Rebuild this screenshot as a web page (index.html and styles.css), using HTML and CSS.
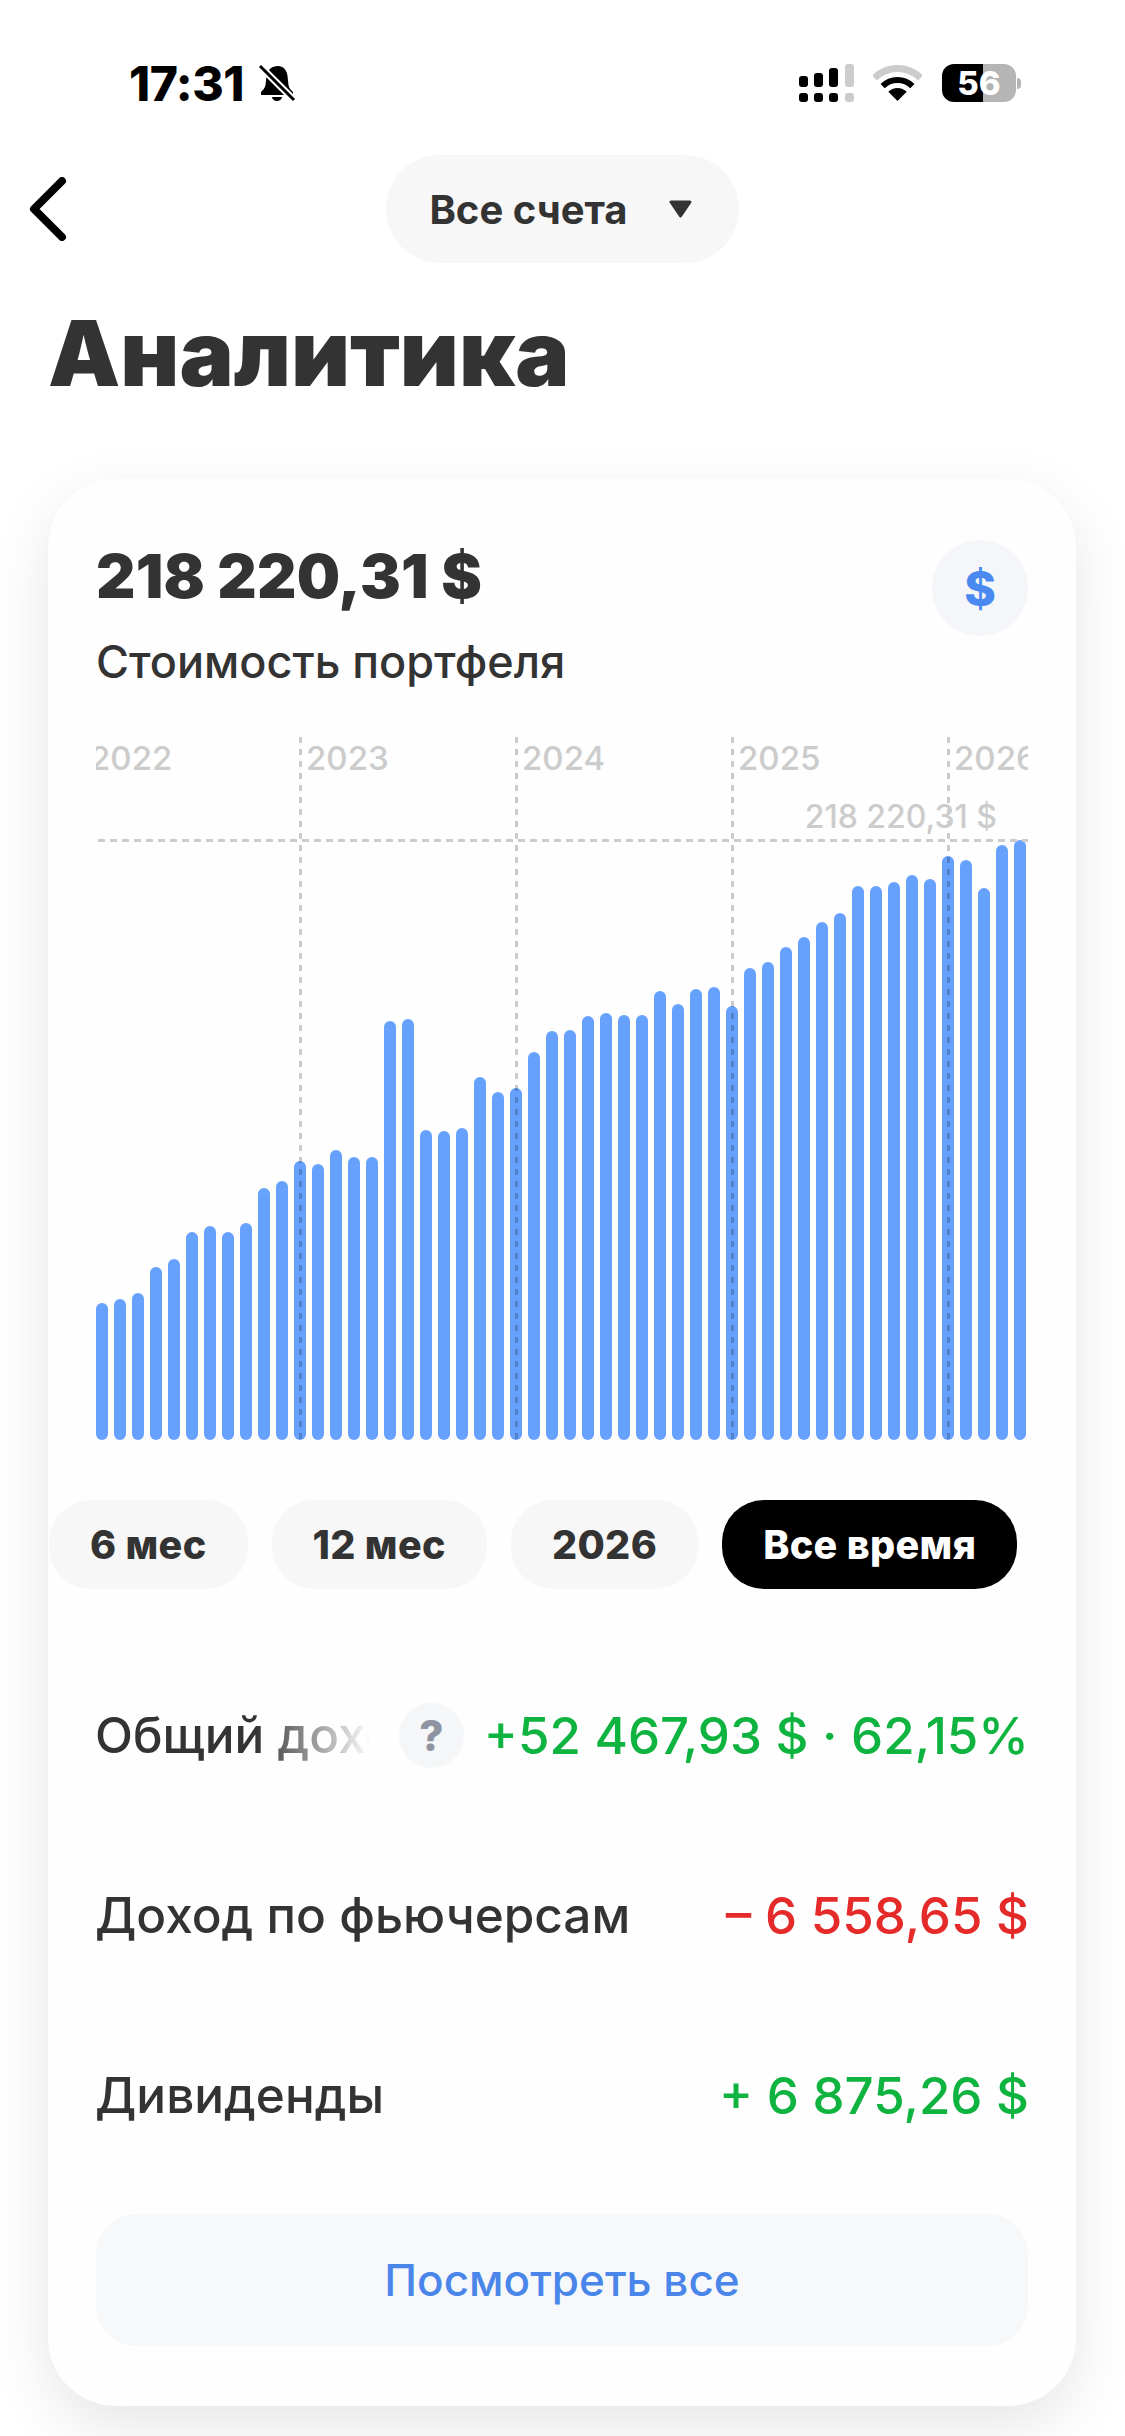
FILE: index.html
```html
<!DOCTYPE html>
<html lang="ru">
<head>
    <meta charset="UTF-8">
    <meta name="viewport" content="width=device-width, initial-scale=1.0">
    <title>Аналитика</title>
    <link rel="stylesheet" href="styles.css">
</head>
<body>
    <div class="status-bar">
        <div class="status-left">
            <span class="status-time">17:31</span>
            <svg class="bell" width="38" height="38" viewBox="0 0 38 38">
                <path d="M20 2c5 0 9 4 9.500 10l1 9c.3 3 2.500 5 4.500 7v3H3v-3c2-2 4-4 4.500-7l1-9C9 6 14 2 20 2z" fill="#000"/>
                <path d="M14 33h10a5 4 0 0 1-10 0z" fill="#000"/>
                <path d="M2 2l34 34" stroke="#fff" stroke-width="7"/>
                <path d="M2 2l34 34" stroke="#000" stroke-width="3"/>
            </svg>
        </div>
        <div class="status-right">
            <svg class="signal" width="55" height="38" viewBox="0 0 55 38">
                <rect x="0" y="12" width="9" height="11" rx="3"/>
                <rect x="15" y="9" width="9" height="14" rx="3"/>
                <rect x="30" y="4" width="9" height="19" rx="3"/>
                <rect class="off" x="46" y="0" width="9" height="23" rx="3"/>
                <rect x="0" y="29" width="9" height="9" rx="3"/>
                <rect x="15" y="29" width="9" height="9" rx="3"/>
                <rect x="30" y="29" width="9" height="9" rx="3"/>
                <rect class="off" x="46" y="29" width="9" height="9" rx="3"/>
            </svg>
            <svg class="wifi" width="49" height="36" viewBox="0 0 49 36">
                <path d="M1.500 13A32.500 32.500 0 0 1 47.500 13" fill="none" stroke="#ccc" stroke-width="7"/>
                <path d="M9.650 21.150A21 21 0 0 1 39.350 21.150" fill="none" stroke="#000" stroke-width="6"/>
                <path d="M24.500 36L15.300 26.800A13 13 0 0 1 33.700 26.800Z" fill="#000"/>
            </svg>
            <div class="battery">
                <div class="battery-body"><span>56</span></div>
                <div class="battery-nub"></div>
            </div>
        </div>
    </div>

    <div class="header">
        <svg class="back" width="38" height="64" viewBox="0 0 38 64">
            <path d="M33 4L5 32l28 28" fill="none" stroke="#000" stroke-width="8" stroke-linecap="round" stroke-linejoin="round"/>
        </svg>
        <button class="account-pill">
            <span>Все счета</span>
            <svg width="25" height="18" viewBox="0 0 25 18">
                <path d="M3 2h19l-9.500 14z" fill="#333" stroke="#333" stroke-width="3" stroke-linejoin="round"/>
            </svg>
        </button>
    </div>

    <h1 class="page-title">Аналитика</h1>

    <div class="card">
        <div class="card-top">
            <div>
                <div class="total">218 220,31 $</div>
                <div class="total-label">Стоимость портфеля</div>
            </div>
            <div class="currency">$</div>
        </div>

        <div class="chart">
            <div class="bars">
                <div class="bar" style="height:137px"></div>
                <div class="bar" style="height:141px"></div>
                <div class="bar" style="height:147px"></div>
                <div class="bar" style="height:173px"></div>
                <div class="bar" style="height:181px"></div>
                <div class="bar" style="height:208px"></div>
                <div class="bar" style="height:214px"></div>
                <div class="bar" style="height:208px"></div>
                <div class="bar" style="height:217px"></div>
                <div class="bar" style="height:252px"></div>
                <div class="bar" style="height:259px"></div>
                <div class="bar" style="height:279px"></div>
                <div class="bar" style="height:276px"></div>
                <div class="bar" style="height:290px"></div>
                <div class="bar" style="height:283px"></div>
                <div class="bar" style="height:283px"></div>
                <div class="bar" style="height:419px"></div>
                <div class="bar" style="height:421px"></div>
                <div class="bar" style="height:310px"></div>
                <div class="bar" style="height:309px"></div>
                <div class="bar" style="height:312px"></div>
                <div class="bar" style="height:363px"></div>
                <div class="bar" style="height:348px"></div>
                <div class="bar" style="height:352px"></div>
                <div class="bar" style="height:388px"></div>
                <div class="bar" style="height:409px"></div>
                <div class="bar" style="height:410px"></div>
                <div class="bar" style="height:424px"></div>
                <div class="bar" style="height:427px"></div>
                <div class="bar" style="height:425px"></div>
                <div class="bar" style="height:425px"></div>
                <div class="bar" style="height:449px"></div>
                <div class="bar" style="height:436px"></div>
                <div class="bar" style="height:451px"></div>
                <div class="bar" style="height:453px"></div>
                <div class="bar" style="height:434px"></div>
                <div class="bar" style="height:472px"></div>
                <div class="bar" style="height:478px"></div>
                <div class="bar" style="height:493px"></div>
                <div class="bar" style="height:503px"></div>
                <div class="bar" style="height:518px"></div>
                <div class="bar" style="height:527px"></div>
                <div class="bar" style="height:554px"></div>
                <div class="bar" style="height:554px"></div>
                <div class="bar" style="height:558px"></div>
                <div class="bar" style="height:565px"></div>
                <div class="bar" style="height:561px"></div>
                <div class="bar" style="height:584px"></div>
                <div class="bar" style="height:580px"></div>
                <div class="bar" style="height:552px"></div>
                <div class="bar" style="height:595px"></div>
                <div class="bar" style="height:600px"></div>
            </div>
            <div class="years">
                <div class="year">2022</div>
                <div class="year">2023</div>
                <div class="year">2024</div>
                <div class="year">2025</div>
                <div class="year">2026</div>
            </div>
            <div class="max-line"></div>
            <div class="max-label">218 220,31 $</div>
        </div>

        <div class="periods">
            <button class="period">6 мес</button>
            <button class="period">12 мес</button>
            <button class="period">2026</button>
            <button class="period active">Все время</button>
        </div>

        <div class="rows">
            <div class="row">
                <span class="row-label faded">Общий доход</span>
                <span class="help">?</span>
                <span class="row-value green">+52 467,93 $ · 62,15%</span>
            </div>
            <div class="row">
                <span class="row-label">Доход по фьючерсам</span>
                <span class="row-value red">– 6 558,65 $</span>
            </div>
            <div class="row">
                <span class="row-label">Дивиденды</span>
                <span class="row-value green">+ 6 875,26 $</span>
            </div>
        </div>

        <button class="show-all">Посмотреть все</button>
    </div>
</body>
</html>
```

FILE: styles.css
```css
* {
    box-sizing: border-box;
}
body {
    font-family: Inter, "Liberation Sans", sans-serif;
    margin: 0;
    height: 2436px;
    overflow: hidden;
    background-color: #fff;
    color: #333;
}
button {
    font-family: inherit;
    border: none;
    cursor: pointer;
}

/* status bar */
.status-bar {
    display: flex;
    justify-content: space-between;
    align-items: center;
    height: 40px;
    margin-top: 63px;
    padding: 0 104px 0 129px;
}
.status-left {
    display: flex;
    align-items: center;
    gap: 14px;
}
.status-time {
    font-size: 48px;
    font-weight: 800;
    color: #000;
    letter-spacing: -0.5px;
}
.status-right {
    display: flex;
    align-items: center;
}
.signal rect {
    fill: #000;
}
.signal rect.off {
    fill: #ccc;
}
.wifi {
    margin-left: 19px;
}
.battery {
    display: flex;
    align-items: center;
    margin-left: 20px;
}
.battery-body {
    display: flex;
    justify-content: center;
    align-items: center;
    width: 74px;
    height: 38px;
    border-radius: 12px;
    background: linear-gradient(90deg, #000 55%, #b5b5b5 55%);
    color: #fff;
    font-size: 33px;
    font-weight: 800;
}
.battery-nub {
    width: 4px;
    height: 11px;
    margin-left: 1px;
    border-radius: 0 4px 4px 0;
    background-color: #b5b5b5;
}

/* header */
.header {
    display: grid;
    grid-template-columns: 1fr auto 1fr;
    align-items: center;
    margin-top: 52px;
}
.back {
    margin-left: 29px;
}
.account-pill {
    display: flex;
    align-items: center;
    gap: 40px;
    height: 108px;
    padding: 0 46px 0 43px;
    border-radius: 54px;
    background-color: #f7f7f7;
    color: #333;
    font-size: 40px;
    font-weight: 700;
}

.page-title {
    margin: 37px 0 0 48px;
    font-size: 91px;
    line-height: 106px;
    font-weight: 900;
    color: #333;
}

/* card */
.card {
    width: 1028px;
    margin: 73px 0 0 48px;
    padding: 61px 48px 60px;
    border-radius: 68px;
    background-color: #fefefe;
    box-shadow: 0 20px 60px rgba(0, 0, 0, 0.1);
}
.card-top {
    display: flex;
    justify-content: space-between;
    align-items: flex-start;
    height: 197px;
}
.total {
    font-size: 61px;
    line-height: 72px;
    font-weight: 900;
    letter-spacing: 0.2px;
}
.total-label {
    margin-top: 25px;
    font-size: 45px;
    line-height: 50px;
    font-weight: 500;
}
.currency {
    display: flex;
    justify-content: center;
    align-items: center;
    width: 96px;
    height: 96px;
    border-radius: 50%;
    background-color: #f5f6f9;
    color: #4a8af0;
    font-size: 48px;
    font-weight: 800;
}

/* chart */
.chart {
    position: relative;
    width: 932px;
    height: 703px;
    overflow: hidden;
}
.bars {
    display: flex;
    align-items: flex-end;
    gap: 6px;
    height: 100%;
}
.bar {
    flex: 0 0 12px;
    border-radius: 6px;
    background-color: #66a1fd;
}
.years {
    position: absolute;
    top: 0;
    left: -13px;
    bottom: 0;
    display: flex;
}
.year {
    flex: 0 0 216px;
    padding: 1px 0 0 7px;
    color: #ccc;
    font-size: 33px;
    line-height: 40px;
    font-weight: 500;
    background-image: repeating-linear-gradient(180deg, rgba(0, 0, 0, 0.2) 0 6px, transparent 6px 12px);
    background-size: 3px 100%;
    background-repeat: no-repeat;
}
.max-line {
    position: absolute;
    top: 102px;
    left: 2px;
    right: 0;
    height: 3px;
    background-image: repeating-linear-gradient(90deg, #ccc 0 7px, transparent 7px 12px);
}
.max-label {
    position: absolute;
    top: 62px;
    right: 31px;
    color: #ccc;
    font-size: 32px;
    line-height: 36px;
    font-weight: 500;
}

/* period switch */
.periods {
    display: flex;
    gap: 24px;
    margin: 60px 0 0 -47px;
}
.period {
    height: 89px;
    padding: 0 41px;
    border-radius: 42px;
    background-color: #f7f7f7;
    color: #333;
    font-size: 39.500px;
    font-weight: 800;
    letter-spacing: 0.35px;
}
.period.active {
    background-color: #000;
    color: #fff;
}

/* rows */
.rows {
    display: flex;
    flex-direction: column;
    gap: 120px;
    margin-top: 116px;
}
.row {
    display: flex;
    align-items: center;
    height: 60px;
    font-size: 49.500px;
    font-weight: 500;
    white-space: nowrap;
}
.row-label {
    margin-left: -1px;
}
.row-label.faded {
    width: 276px;
    overflow: hidden;
    -webkit-mask-image: linear-gradient(90deg, #000 58%, transparent 100%);
    mask-image: linear-gradient(90deg, #000 58%, transparent 100%);
}
.help {
    display: flex;
    justify-content: center;
    align-items: center;
    width: 65px;
    height: 65px;
    margin-left: 28px;
    border-radius: 50%;
    background-color: #f5f6f8;
    color: #8f94a3;
    font-size: 42px;
    font-weight: 800;
}
.row-value {
    margin: 0 -1px 0 auto;
    font-size: 51px;
}
.green {
    color: #0fb33f;
}
.red {
    color: #e52a2a;
}

.show-all {
    display: block;
    width: 100%;
    height: 132px;
    margin-top: 89px;
    border-radius: 40px;
    background-color: #f7f8fa;
    color: #4a86ea;
    font-size: 44px;
    font-weight: 500;
}
```
